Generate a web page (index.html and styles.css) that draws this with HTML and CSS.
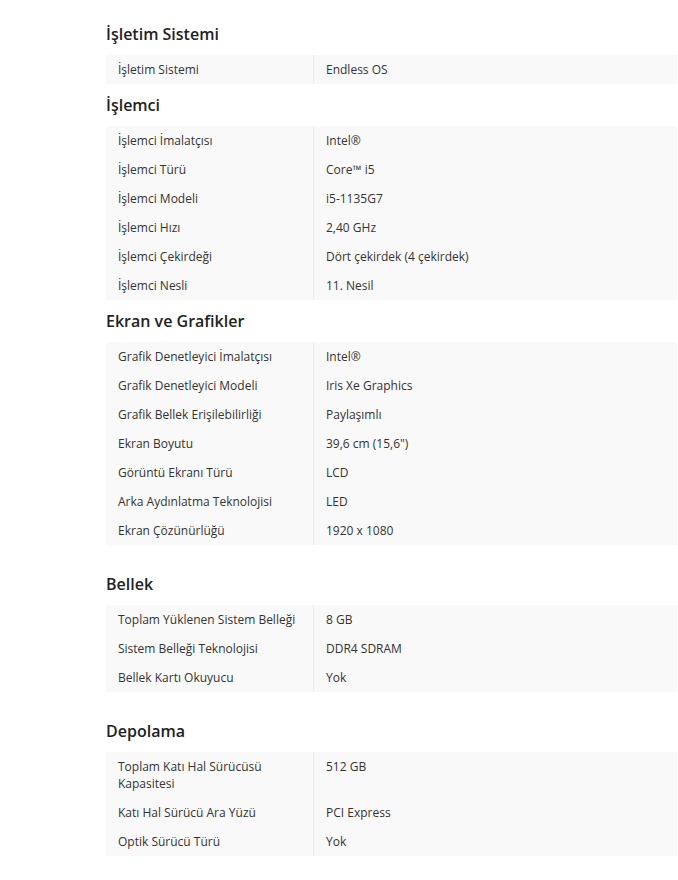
FILE: index.html
```html
<!DOCTYPE html>
<html lang="tr">
<head>
    <meta charset="UTF-8">
    <meta name="viewport" content="width=device-width, initial-scale=1.0">
    <title>Teknik Özellikler</title>
    <link rel="stylesheet" href="styles.css">
</head>
<body>
    <div class="specs">
        <div class="spec-group">
            <h3>İşletim Sistemi</h3>
            <table class="spec-table">
                <tr><td>İşletim Sistemi</td><td>Endless OS</td></tr>
            </table>
        </div>

        <div class="spec-group">
            <h3>İşlemci</h3>
            <table class="spec-table">
                <tr><td>İşlemci İmalatçısı</td><td>Intel®</td></tr>
                <tr><td>İşlemci Türü</td><td>Core™ i5</td></tr>
                <tr><td>İşlemci Modeli</td><td>i5-1135G7</td></tr>
                <tr><td>İşlemci Hızı</td><td>2,40 GHz</td></tr>
                <tr><td>İşlemci Çekirdeği</td><td>Dört çekirdek (4 çekirdek)</td></tr>
                <tr><td>İşlemci Nesli</td><td>11. Nesil</td></tr>
            </table>
        </div>

        <div class="spec-group">
            <h3>Ekran ve Grafikler</h3>
            <table class="spec-table">
                <tr><td>Grafik Denetleyici İmalatçısı</td><td>Intel®</td></tr>
                <tr><td>Grafik Denetleyici Modeli</td><td>Iris Xe Graphics</td></tr>
                <tr><td>Grafik Bellek Erişilebilirliği</td><td>Paylaşımlı</td></tr>
                <tr><td>Ekran Boyutu</td><td>39,6 cm (15,6")</td></tr>
                <tr><td>Görüntü Ekranı Türü</td><td>LCD</td></tr>
                <tr><td>Arka Aydınlatma Teknolojisi</td><td>LED</td></tr>
                <tr><td>Ekran Çözünürlüğü</td><td>1920 x 1080</td></tr>
            </table>
        </div>

        <div class="spec-group spaced">
            <h3>Bellek</h3>
            <table class="spec-table">
                <tr><td>Toplam Yüklenen Sistem Belleği</td><td>8 GB</td></tr>
                <tr><td>Sistem Belleği Teknolojisi</td><td>DDR4 SDRAM</td></tr>
                <tr><td>Bellek Kartı Okuyucu</td><td>Yok</td></tr>
            </table>
        </div>

        <div class="spec-group spaced">
            <h3>Depolama</h3>
            <table class="spec-table">
                <tr><td>Toplam Katı Hal Sürücüsü Kapasitesi</td><td>512 GB</td></tr>
                <tr><td>Katı Hal Sürücü Ara Yüzü</td><td>PCI Express</td></tr>
                <tr><td>Optik Sürücü Türü</td><td>Yok</td></tr>
            </table>
        </div>
    </div>
</body>
</html>
```

FILE: styles.css
```css
body {
    background-color: #ffffff;
    color: #333333;
    font-family: "Open Sans", Arial, sans-serif;
    margin: 0;
}
.specs {
    padding: 23px 1px 0 106px;
}
.spec-group {
    margin-bottom: 10px;
}
.spec-group.spaced {
    margin-top: 28px;
}
.spec-group h3 {
    font-size: 16px;
    font-weight: 600;
    line-height: 22px;
    color: #222222;
    margin: 0 0 10px 0;
}
.spec-table {
    width: 100%;
    border-collapse: collapse;
    background-color: #f9f9f9;
    font-size: 12px;
    line-height: 17px;
}
.spec-table td {
    padding: 6px 12px;
    vertical-align: top;
}
.spec-table td:first-child {
    width: 183px;
    border-right: 1px solid #ececec;
}
```
